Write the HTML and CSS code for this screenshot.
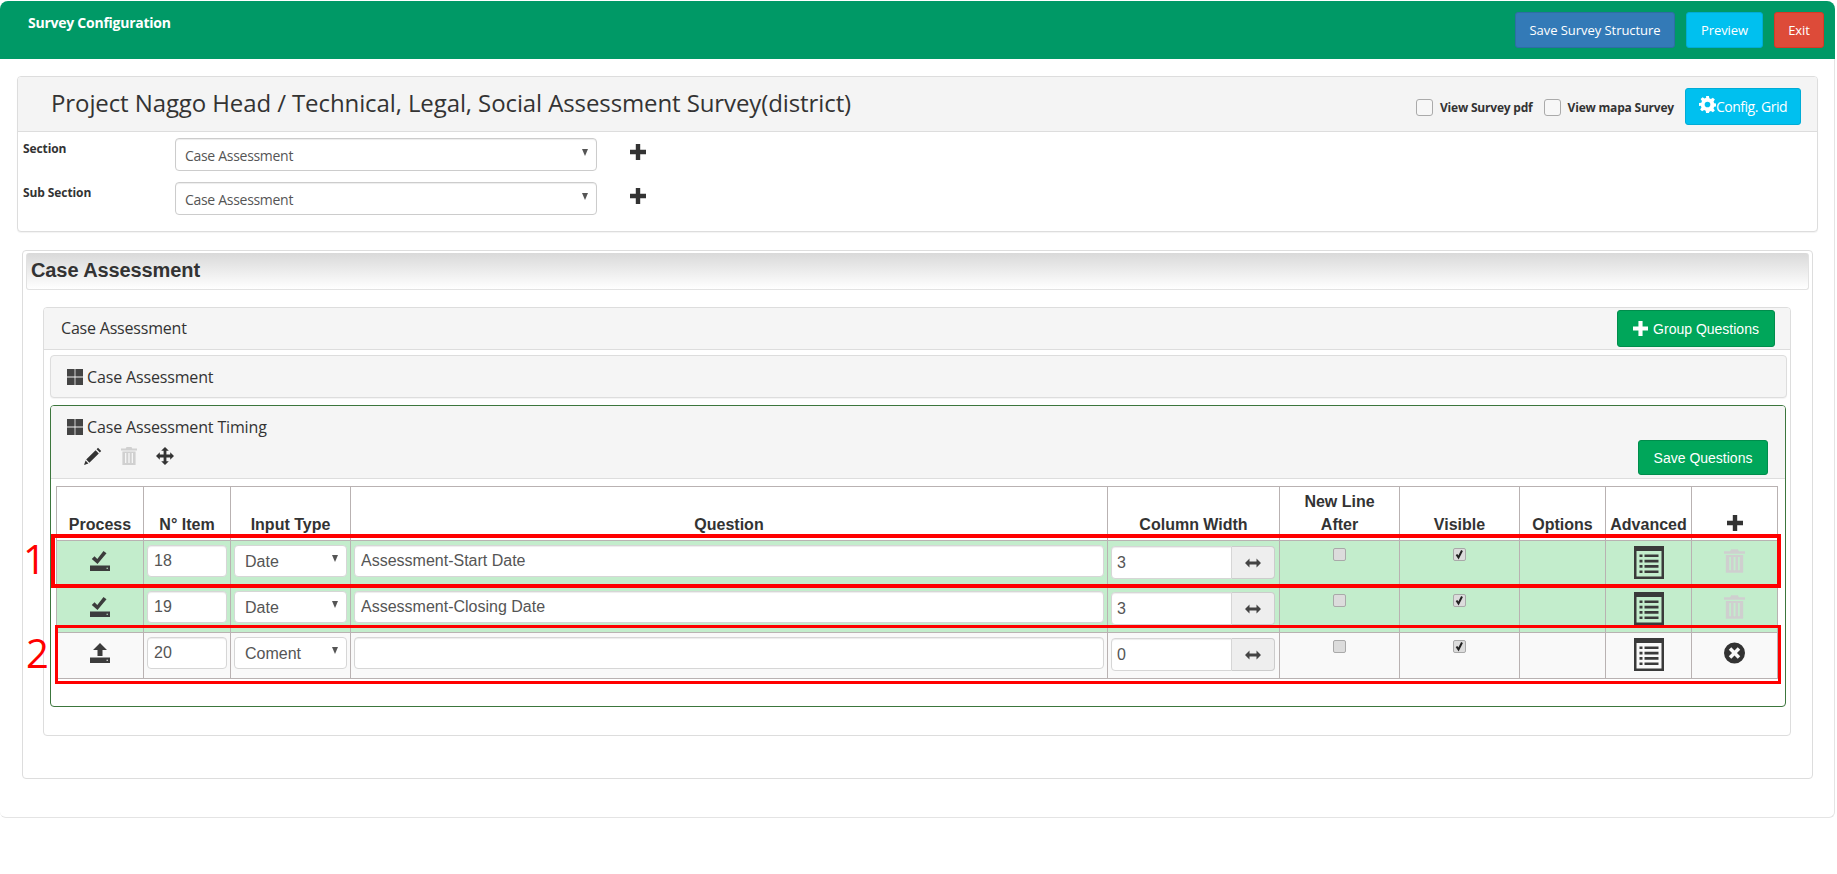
FILE: index.html
```html
<!DOCTYPE html>
<html lang="en">
<head>
<meta charset="utf-8">
<title>Survey Configuration</title>
<link rel="stylesheet" href="styles.css">
</head>
<body>
<svg class="sprites" width="0" height="0" aria-hidden="true">
  <symbol id="i-grid" viewBox="0 0 16 16"><path d="M0 0h7.600v7.600H0zM8.400 0H16v7.600H8.400zM0 8.400h7.600V16H0zM8.400 8.400H16V16H8.400z"/></symbol>
  <symbol id="i-plus" viewBox="0 0 16 16"><path d="M5.800 0h4.400v5.800H16v4.400h-5.800V16H5.800v-5.800H0V5.800h5.800z"/></symbol>
  <symbol id="i-gear" viewBox="0 0 24 24"><path d="M10 0h4l.6 3.300 2.200.9L19.600 2.300l2.800 2.800-1.900 2.800.9 2.200 3.300.6v4l-3.300.6-.9 2.200 1.900 2.800-2.800 2.800-2.800-1.900-2.200.9L14 24h-4l-.6-3.300-2.200-.9-2.800 1.900-2.800-2.800 1.900-2.800-.9-2.200L0 14v-4l3.300-.6.9-2.200-1.900-2.800 2.800-2.800 2.800 1.900 2.200-.9zM12 8a4 4 0 1 0 0 8 4 4 0 0 0 0-8z" fill-rule="evenodd"/></symbol>
  <symbol id="i-pencil" viewBox="0 0 18 18"><path d="M14 0.800 17.200 4 15.800 5.400 12.600 2.200zM11.600 3.200 14.800 6.400 5.400 15.800 2.200 12.600zM1.600 13.600 4.400 16.400 0 18z"/></symbol>
  <symbol id="i-trash" viewBox="0 0 16 18"><path fill-rule="evenodd" d="M5.500 0h5l.8 1.600H16v1.800H0V1.600h4.700zM1.400 4.400h13.200V18H1.400zM4 6v10h1.300V6zM7.300 6v10h1.400V6zM10.700 6v10H12V6z"/></symbol>
  <symbol id="i-move" viewBox="0 0 18 18"><path d="M9 0l3.800 3.800h-2.400v3.800h3.800V5.200L18 9l-3.800 3.800v-2.400h-3.800v3.800h2.400L9 18l-3.800-3.800h2.400v-3.800H3.800v2.400L0 9l3.800-3.800v2.400h3.800V3.800H5.200z"/></symbol>
  <symbol id="i-saved" viewBox="0 0 20 20"><path d="M0 14.500h20V20H0zM16.500 16.700v1h1.500v-1z" fill-rule="evenodd"/><path d="M7.500 13 1.800 8 4.500 5.300 7.300 8 13.500 0 16.500 2.200z"/></symbol>
  <symbol id="i-upload" viewBox="0 0 20 20"><path d="M0 14.500h20V20H0zM16.500 16.700v1h1.500v-1z" fill-rule="evenodd"/><path d="M10 0l7 7h-4.500v6h-5V7H3z"/></symbol>
  <symbol id="i-list" viewBox="0 0 30 33"><path fill-rule="evenodd" d="M0 0h30v33H0zM2.500 5v25.500h25V5z"/><path d="M5.500 8.500h3v2.600h-3zM10.500 8.500h14v2.600h-14zM5.500 13.800h3v2.600h-3zM10.500 13.800h14v2.600h-14zM5.500 19.100h3v2.600h-3zM10.500 19.100h14v2.600h-14zM5.500 24.400h3v2.600h-3zM10.500 24.400h14v2.600h-14z"/></symbol>
  <symbol id="i-remove" viewBox="0 0 22 22"><path fill-rule="evenodd" d="M11 0a11 11 0 1 1 0 22 11 11 0 0 1 0-22zM7.600 5 5 7.600 8.400 11 5 14.400 7.600 17 11 13.600 14.400 17 17 14.400 13.600 11 17 7.600 14.400 5 11 8.400z"/></symbol>
  <symbol id="i-resize" viewBox="0 0 16 10"><path d="M0 5 4.500 0.500V3.500h7V0.500L16 5 11.500 9.500V6.500h-7v3z"/></symbol>
</svg>

<header class="topbar">
  <div class="topbar-title">Survey Configuration</div>
  <div class="topbar-actions">
    <a class="btn btn-blue btn-save">Save Survey Structure</a>
    <a class="btn btn-info btn-preview">Preview</a>
    <a class="btn btn-red btn-exit">Exit</a>
  </div>
</header>

<main class="shell">
  <section class="panel project">
    <div class="project-head">
      <h1 class="project-title">Project Naggo Head / Technical, Legal, Social Assessment Survey(district)</h1>
      <div class="project-tools">
        <label class="view-check"><span class="fake-check"></span>View Survey pdf</label>
        <label class="view-check"><span class="fake-check"></span>View mapa Survey</label>
        <a class="btn btn-info btn-config"><svg class="ico ico-gear"><use href="#i-gear"/></svg>Config. Grid</a>
      </div>
    </div>
    <div class="form-row">
      <label class="form-label">Section</label>
      <select class="form-select"><option>Case Assessment</option></select>
      <svg class="ico ico-formplus"><use href="#i-plus"/></svg>
    </div>
    <div class="form-row">
      <label class="form-label">Sub Section</label>
      <select class="form-select"><option>Case Assessment</option></select>
      <svg class="ico ico-formplus"><use href="#i-plus"/></svg>
    </div>
  </section>

  <section class="panel section-box">
    <h2 class="section-bar">Case Assessment</h2>
    <div class="panel sub-box">
      <div class="sub-head">
        <span class="sub-title">Case Assessment</span>
        <a class="btn btn-green btn-group"><svg class="ico ico-groupplus"><use href="#i-plus"/></svg>Group Questions</a>
      </div>
      <div class="panel group-closed">
        <svg class="ico ico-grid"><use href="#i-grid"/></svg><span class="group-title">Case Assessment</span>
      </div>
      <div class="panel group-open">
        <div class="group-head">
          <div class="group-head-main">
            <div class="group-name"><svg class="ico ico-grid"><use href="#i-grid"/></svg><span class="group-title">Case Assessment Timing</span></div>
            <div class="group-tools">
              <svg class="ico ico-pencil"><use href="#i-pencil"/></svg>
              <svg class="ico ico-trash-sm"><use href="#i-trash"/></svg>
              <svg class="ico ico-move"><use href="#i-move"/></svg>
            </div>
          </div>
          <a class="btn btn-green btn-savq">Save Questions</a>
        </div>
        <div class="table-wrap">
          <table class="qtable">
            <colgroup>
              <col class="c-process"><col class="c-item"><col class="c-type"><col class="c-question"><col class="c-width"><col class="c-newline"><col class="c-visible"><col class="c-options"><col class="c-adv"><col class="c-del">
            </colgroup>
            <thead>
              <tr>
                <th>Process</th><th>N° Item</th><th>Input Type</th><th>Question</th><th>Column Width</th><th>New Line<br>After</th><th>Visible</th><th>Options</th><th>Advanced</th>
                <th><svg class="ico ico-thplus"><use href="#i-plus"/></svg></th>
              </tr>
            </thead>
            <tbody>
              <tr class="row-saved">
                <td class="c"><svg class="ico ico-state"><use href="#i-saved"/></svg></td>
                <td><input class="cell-input" value="18"></td>
                <td><select class="cell-select"><option>Date</option></select></td>
                <td><input class="cell-input" value="Assessment-Start Date"></td>
                <td><div class="width-group"><input class="width-input" value="3"><span class="width-addon"><svg class="ico ico-resize"><use href="#i-resize"/></svg></span></div></td>
                <td class="c"><input class="cell-check" type="checkbox"></td>
                <td class="c"><input class="cell-check" type="checkbox" checked></td>
                <td></td>
                <td class="c"><svg class="ico ico-list"><use href="#i-list"/></svg></td>
                <td class="c"><svg class="ico ico-trash"><use href="#i-trash"/></svg></td>
              </tr>
              <tr class="row-saved">
                <td class="c"><svg class="ico ico-state"><use href="#i-saved"/></svg></td>
                <td><input class="cell-input" value="19"></td>
                <td><select class="cell-select"><option>Date</option></select></td>
                <td><input class="cell-input" value="Assessment-Closing Date"></td>
                <td><div class="width-group"><input class="width-input" value="3"><span class="width-addon"><svg class="ico ico-resize"><use href="#i-resize"/></svg></span></div></td>
                <td class="c"><input class="cell-check" type="checkbox"></td>
                <td class="c"><input class="cell-check" type="checkbox" checked></td>
                <td></td>
                <td class="c"><svg class="ico ico-list"><use href="#i-list"/></svg></td>
                <td class="c"><svg class="ico ico-trash"><use href="#i-trash"/></svg></td>
              </tr>
              <tr class="row-new">
                <td class="c"><svg class="ico ico-state"><use href="#i-upload"/></svg></td>
                <td><input class="cell-input" value="20"></td>
                <td><select class="cell-select"><option>Coment</option></select></td>
                <td><input class="cell-input" value=""></td>
                <td><div class="width-group"><input class="width-input" value="0"><span class="width-addon"><svg class="ico ico-resize"><use href="#i-resize"/></svg></span></div></td>
                <td class="c"><input class="cell-check" type="checkbox"></td>
                <td class="c"><input class="cell-check" type="checkbox" checked></td>
                <td></td>
                <td class="c"><svg class="ico ico-list"><use href="#i-list"/></svg></td>
                <td class="c"><svg class="ico ico-remove"><use href="#i-remove"/></svg></td>
              </tr>
            </tbody>
          </table>
          <div class="mark mark-1"></div>
          <div class="mark mark-2"></div>
          <span class="mark-num num-1">1</span>
          <span class="mark-num num-2">2</span>
        </div>
      </div>
    </div>
  </section>
</main>
</body>
</html>
```
FILE: styles.css
```css
* { box-sizing: border-box; }
html, body { margin: 0; padding: 0; }
body {
  background: #fff;
  color: #333;
  font-family: "Open Sans", "Noto Sans", sans-serif;
  font-size: 14px;
  height: 874px;
  overflow: hidden;
}
.sprites { position: absolute; }
.ico { display: inline-block; fill: currentColor; flex: none; }

/* top bar */
.topbar {
  margin: 1px 2px 0 0;
  height: 58px;
  background: #009966;
  border-radius: 8px 8px 0 0;
  display: flex;
  justify-content: space-between;
  align-items: flex-start;
  padding: 11px 11px 0 28px;
}
.topbar-title { color: #fff; font-weight: 700; font-size: 14px; line-height: 22px; letter-spacing: -0.25px; white-space: nowrap; }
.topbar-actions { display: flex; gap: 11px; }

.btn {
  display: inline-flex;
  align-items: center;
  justify-content: center;
  border-radius: 3px;
  color: #fff;
  border: 1px solid transparent;
  white-space: nowrap;
}
.btn-blue { background: #337ab7; border-color: #2e6da4; }
.btn-info { background: #00c0ef; border-color: #00acd6; }
.btn-red { background: #dd4b39; border-color: #d73925; }
.btn-green { background: #00a65a; border-color: #008d4c; }
.btn-save, .btn-preview, .btn-exit { height: 36px; font-size: 13px; letter-spacing: -0.05px; }
.btn-save { width: 160px; }
.btn-preview { width: 77px; }
.btn-exit { width: 50px; }

/* shell */
.shell {
  margin-right: 2px;
  height: 759px;
  border: 1px solid #e4e4e4;
  border-top: 0;
  border-left: 0;
  border-radius: 0 0 6px 6px;
  padding-top: 17px;
}
.panel { background: #fff; border: 1px solid #ddd; border-radius: 4px; }

/* project panel */
.project { margin-left: 17px; width: 1801px; height: 156px; box-shadow: 0 1px 1px rgba(0,0,0,.05); }
.project-head {
  height: 55px;
  background: #f4f4f4;
  border-bottom: 1px solid #ddd;
  display: flex;
  justify-content: space-between;
  padding: 0 16px 0 33px;
  border-radius: 3px 3px 0 0;
}
.project-title { margin: 0; font-weight: 400; font-size: 24px; line-height: 52px; color: #333; white-space: nowrap; letter-spacing: -0.1px; }
.project-tools { display: flex; align-items: flex-start; padding-top: 11px; }
.view-check { display: flex; align-items: center; gap: 7px; margin: 0 11px 0 0; height: 37px; font-size: 12px; font-weight: 700; letter-spacing: -0.2px; white-space: nowrap; padding-top: 2px; }
.fake-check { width: 17px; height: 17px; background: #f7f7f7; border: 1px solid #aaa; border-radius: 3px; display: block; }
.btn-config { width: 116px; height: 37px; font-size: 14px; letter-spacing: -0.5px; }
.ico-gear { width: 17px; height: 17px; margin-bottom: 4px; }

.form-row { display: flex; align-items: flex-start; height: 44px; padding-top: 6px; padding-left: 5px; }
.form-label { width: 152px; font-size: 12px; font-weight: 700; letter-spacing: -0.1px; line-height: 14px; padding-top: 4px; color: #333; }
.form-select, .cell-select {
  appearance: none;
  background-color: #fff;
  background-image: url("data:image/svg+xml,%3Csvg xmlns='http://www.w3.org/2000/svg' width='6' height='7'%3E%3Cpath d='M0 0h6L3 7z' fill='%23555'/%3E%3C/svg%3E");
  background-repeat: no-repeat;
}
.form-select {
  width: 422px;
  height: 33px;
  border: 1px solid #ccc;
  border-radius: 4px;
  background-position: right 8px top 10px;
  box-shadow: inset 0 1px 1px rgba(0,0,0,.075);
  color: #555;
  font-family: "Open Sans", sans-serif;
  font-size: 14px;
  letter-spacing: -0.3px;
  padding: 6px 9px 4px;
}
.ico-formplus { width: 16px; height: 16px; margin: 6px 0 0 33px; color: #333; }

/* section panel */
.section-box { margin: 18px 0 0 22px; width: 1791px; height: 529px; padding: 2px 3px 0; }
.section-bar {
  margin: 0;
  height: 37px;
  border: 1px solid #e2e2e2;
  border-top: 0;
  border-radius: 3px;
  background: linear-gradient(#d9d9d9, #ffffff);
  font-family: "Liberation Sans", Arial, sans-serif;
  font-size: 20px;
  font-weight: 700;
  line-height: 35px;
  padding-left: 4px;
  color: #333;
  letter-spacing: -0.1px;
}
.sub-box { margin: 17px 0 0 17px; width: 1748px; height: 429px; }
.sub-head {
  height: 42px;
  background: #f5f5f5;
  border-bottom: 1px solid #ddd;
  display: flex;
  justify-content: space-between;
  align-items: flex-start;
  padding: 2px 15px 0 17px;
  border-radius: 3px 3px 0 0;
}
.sub-title { font-size: 16px; line-height: 36px; letter-spacing: -0.2px; color: #333; }
.btn-group, .btn-savq { font-family: "Liberation Sans", Arial, sans-serif; font-size: 14px; }
.btn-group { width: 158px; height: 37px; }
.ico-groupplus { width: 15px; height: 15px; margin-right: 5px; }

.group-closed {
  margin: 5px 0 0 6px;
  width: 1737px;
  height: 43px;
  background: #f5f5f5;
  display: flex;
  align-items: center;
  padding: 0 0 0 16px;
  box-shadow: 0 1px 1px rgba(0,0,0,.05);
}
.ico-grid { width: 16px; height: 16px; margin-right: 4px; color: #444; }
.group-title { font-size: 16px; letter-spacing: -0.15px; color: #333; }

.group-open { margin: 7px 0 0 6px; width: 1736px; height: 302px; border-color: #3c763d; }
.group-head {
  height: 73px;
  background: #f5f5f5;
  border-bottom: 1px solid #ddd;
  border-radius: 3px 3px 0 0;
  display: flex;
  justify-content: space-between;
  align-items: flex-end;
  padding: 0 17px 3px 16px;
}
.group-head-main { align-self: flex-start; padding-top: 10px; }
.group-name { display: flex; align-items: center; height: 22px; }
.group-tools { display: flex; align-items: center; gap: 19px; padding: 9px 0 0 17px; color: #333; }
.ico-pencil { width: 18px; height: 18px; }
.ico-trash-sm { width: 16px; height: 18px; color: #d0d0d0; }
.ico-move { width: 18px; height: 18px; }
.btn-savq { width: 130px; height: 35px; }

/* table */
.table-wrap { position: relative; margin: 7px 0 0 5px; width: 1721px; }
.qtable {
  width: 1721px;
  table-layout: fixed;
  border-collapse: collapse;
  font-family: "Liberation Sans", Arial, sans-serif;
  font-size: 16px;
}
.c-process { width: 87px; }
.c-item { width: 87px; }
.c-type { width: 120px; }
.c-question { width: 757px; }
.c-width { width: 172px; }
.c-newline, .c-visible { width: 120px; }
.c-options, .c-adv, .c-del { width: 86px; }
.qtable th, .qtable td { border: 1px solid #b9b2b2; }
.qtable th {
  height: 54px;
  padding: 3px 0 4px;
  vertical-align: bottom;
  text-align: center;
  font-weight: 700;
  line-height: 23px;
  color: #333;
}
.qtable td { height: 46px; padding: 4px 3px 0; vertical-align: top; }
.qtable td.c { text-align: center; }
.row-saved td { background: #c3edcc; }
.row-new td { background: #f9f9f9; }
.ico-thplus { width: 16px; height: 16px; vertical-align: -1px; color: #333; }
.ico-state { width: 20px; height: 20px; margin-top: 6px; color: #3c3c3c; }

.cell-input, .width-input, .cell-select {
  font-family: "Liberation Sans", Arial, sans-serif;
  font-size: 16px;
  color: #555;
  border: 1px solid #d6d6d6;
  outline: 0;
}
.cell-input, .width-input { background: #fff; }
.cell-input {
  display: block;
  width: 100%;
  height: 32px;
  border-radius: 4px;
  padding: 0 6px 1px;
  box-shadow: inset 0 1px 1px rgba(0,0,0,.075);
}
.cell-select {
  display: block;
  width: 113px;
  height: 32px;
  border-radius: 4px;
  padding: 3px 10px;
  background-position: right 8px top 9px;
}
.width-group { display: flex; height: 33px; margin-top: 1px; }
.width-input {
  width: 121px;
  height: 33px;
  border-radius: 4px 0 0 4px;
  padding: 0 5px;
  box-shadow: inset 0 1px 1px rgba(0,0,0,.075);
}
.width-addon {
  width: 43px;
  height: 33px;
  background: #eee;
  border: 1px solid #ccc;
  border-left: 0;
  border-radius: 0 4px 4px 0;
  display: flex;
  align-items: center;
  justify-content: center;
  color: #444;
}
.ico-resize { width: 16px; height: 10px; }
.cell-check {
  appearance: none;
  display: inline-block;
  margin: 3px 0 0 -1px;
  width: 13px;
  height: 13px;
  background-color: #dcdcdc;
  border: 1px solid #a9a9a9;
  border-radius: 2px;
  vertical-align: top;
}
.cell-check:checked {
  background-image: url("data:image/svg+xml,%3Csvg xmlns='http://www.w3.org/2000/svg' width='11' height='11'%3E%3Cpath d='M2.500 5.500 4.500 8.500 8 1.500' fill='none' stroke='%23222' stroke-width='2'/%3E%3C/svg%3E");
  background-repeat: no-repeat;
  background-position: center;
}
.ico-list { width: 30px; height: 33px; margin: 1px auto 0; color: #3a3a3a; display: block; }
.ico-trash { width: 21px; height: 24px; margin-top: 4px; color: #cfcfcf; }
.ico-remove { width: 21px; height: 22px; margin-top: 5px; color: #333; }

/* red annotations laid over the table */
.mark { position: absolute; border: 4px solid #f00; pointer-events: none; }
.mark-1 { left: -5px; top: 48px; width: 1730px; height: 54px; }
.mark-2 { left: -1px; top: 139px; width: 1726px; height: 59px; border-width: 3px; }
.mark-num { position: absolute; color: #f00; font-family: "Open Sans", sans-serif; font-size: 40px; line-height: 44px; }
.num-1 { left: -33px; top: 51px; }
.num-2 { left: -30px; top: 145px; }
```
